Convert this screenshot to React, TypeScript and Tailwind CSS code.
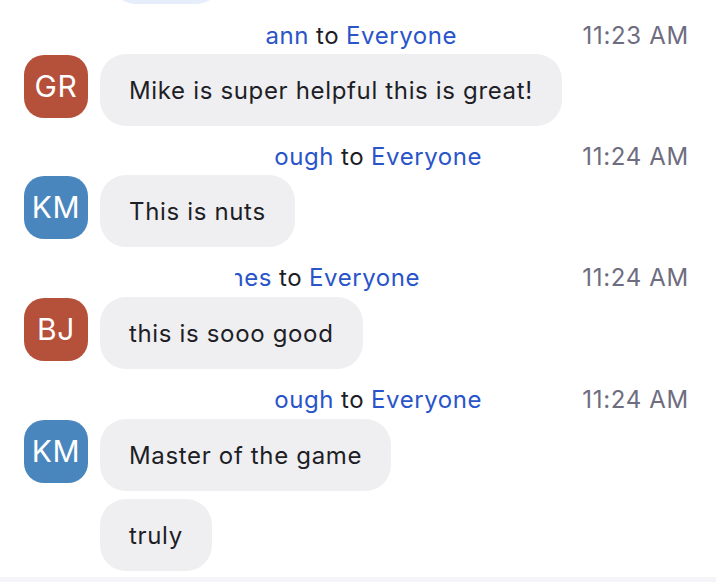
import React from "react";

const font = { fontFamily: "Inter, 'Liberation Sans', sans-serif" };

function Header({ name, clipStart, clipWidth, time }: { name: string; clipStart: string; clipWidth: string; time: string }) {
  return (
    <div className="flex h-[30px] items-center justify-between pr-[27px] text-[24px] leading-[30px] tracking-[0.55px]">
      <div className={`flex ${clipStart}`}>
        <div className={`flex justify-end overflow-hidden ${clipWidth}`}>
          <span className="shrink-0 whitespace-nowrap text-[#2a54c9]">{name}</span>
        </div>
        <span className="ml-[7px] text-[#1d1d26]">to</span>
        <span className="ml-[7px] text-[#2a54c9]">Everyone</span>
      </div>
      <span className="tracking-[0.7px] text-[#6e6d7f]">{time}</span>
    </div>
  );
}

function Bubble({ text }: { text: string }) {
  return (
    <div className="flex h-[72px] items-center rounded-[26px] bg-[#efeff1] px-[29px] pt-[2px] text-[24px] tracking-[0.66px] whitespace-nowrap text-[#1e1e26]">
      {text}
    </div>
  );
}

function Avatar({ initials, color }: { initials: string; color: string }) {
  return (
    <div className={`mt-[1px] flex h-[63px] w-[64px] shrink-0 items-center justify-center rounded-[20px] text-[30px] tracking-[0.6px] text-white ${color}`}>
      {initials}
    </div>
  );
}

export default function App() {
  return (
    <div className="flex h-[582px] w-full flex-col overflow-hidden bg-white" style={font}>
      <div className="-mt-[68px] ml-[110px] h-[72px] w-[112px] shrink-0 rounded-[26px] bg-[#e6eefb]" />

      <div className="mt-[17px]">
        <Header name="Greg Rossmann" clipStart="ml-[265px]" clipWidth="w-[44px]" time="11:23 AM" />
        <div className="mt-[3px] flex gap-[12px] pl-[24px]">
          <Avatar initials="GR" color="bg-[#b5503a]" />
          <Bubble text="Mike is super helpful this is great!" />
        </div>
      </div>

      <div className="mt-[16px]">
        <Header name="Kevin McDonough" clipStart="ml-[275px]" clipWidth="w-[59px]" time="11:24 AM" />
        <div className="mt-[3px] flex gap-[12px] pl-[24px]">
          <Avatar initials="KM" color="bg-[#4a86be]" />
          <Bubble text="This is nuts" />
        </div>
      </div>

      <div className="mt-[16px]">
        <Header name="Barbara Jones" clipStart="ml-[235px]" clipWidth="w-[37px]" time="11:24 AM" />
        <div className="mt-[4px] flex gap-[12px] pl-[24px]">
          <Avatar initials="BJ" color="bg-[#b5503a]" />
          <Bubble text="this is sooo good" />
        </div>
      </div>

      <div className="mt-[16px]">
        <Header name="Kevin McDonough" clipStart="ml-[275px]" clipWidth="w-[59px]" time="11:24 AM" />
        <div className="mt-[4px] flex gap-[12px] pl-[24px]">
          <Avatar initials="KM" color="bg-[#4a86be]" />
          <Bubble text="Master of the game" />
        </div>
        <div className="mt-[8px] flex pl-[100px]">
          <Bubble text="truly" />
        </div>
      </div>

      <div className="mt-[6px] h-[6px] w-full shrink-0 bg-[#f4f4f9]" />
    </div>
  );
}
